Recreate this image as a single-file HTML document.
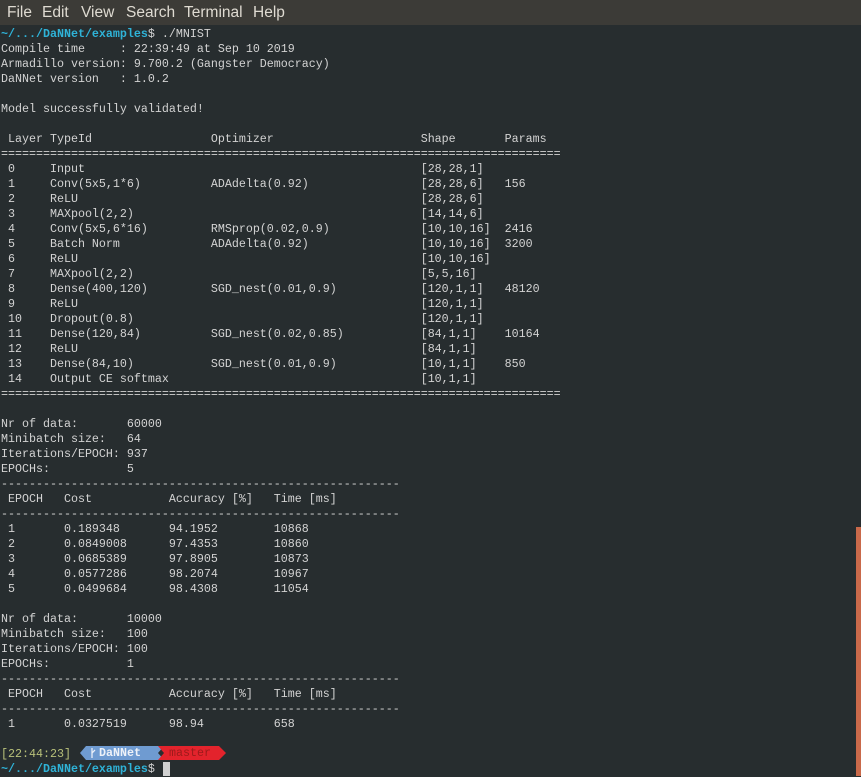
<!DOCTYPE html>
<html><head><meta charset="utf-8"><style>
html,body{margin:0;padding:0;width:861px;height:776px;overflow:hidden;background:#272d2f}
.menu{position:absolute;left:0;top:0;width:861px;height:25px;background:#3c3b37;color:#dfdbd2;font:15.5px "Liberation Sans",sans-serif}
.menu span{position:absolute;top:4px}
pre{position:absolute;left:1px;top:27px;margin:0;font:11.67px/15px "Liberation Mono",monospace;color:#d3d3d3;white-space:pre}
.p{color:#2fb3d8;font-weight:bold}
.y{color:#b8c07a}
.bar{position:absolute;left:856px;top:527px;width:5px;height:249px;background:#c9694a}
.seg{position:absolute;top:746px;height:14px;font:bold 11.67px/14px "Liberation Mono",monospace}
.cur{position:absolute;left:163px;top:762px;width:7px;height:14px;background:#d0d0d0}
</style></head><body>
<div class="menu"><span style="left:7px">File</span><span style="left:42px">Edit</span><span style="left:81px">View</span><span style="left:126px">Search</span><span style="left:184px">Terminal</span><span style="left:253px">Help</span></div>
<pre><span class="p">~/.../DaNNet/examples</span>$ ./MNIST
Compile time     : 22:39:49 at Sep 10 2019
Armadillo version: 9.700.2 (Gangster Democracy)
DaNNet version   : 1.0.2

Model successfully validated!

 Layer TypeId                 Optimizer                     Shape       Params
================================================================================
 0     Input                                                [28,28,1]
 1     Conv(5x5,1*6)          ADAdelta(0.92)                [28,28,6]   156
 2     ReLU                                                 [28,28,6]
 3     MAXpool(2,2)                                         [14,14,6]
 4     Conv(5x5,6*16)         RMSprop(0.02,0.9)             [10,10,16]  2416
 5     Batch Norm             ADAdelta(0.92)                [10,10,16]  3200
 6     ReLU                                                 [10,10,16]
 7     MAXpool(2,2)                                         [5,5,16]
 8     Dense(400,120)         SGD_nest(0.01,0.9)            [120,1,1]   48120
 9     ReLU                                                 [120,1,1]
 10    Dropout(0.8)                                         [120,1,1]
 11    Dense(120,84)          SGD_nest(0.02,0.85)           [84,1,1]    10164
 12    ReLU                                                 [84,1,1]
 13    Dense(84,10)           SGD_nest(0.01,0.9)            [10,1,1]    850
 14    Output CE softmax                                    [10,1,1]
================================================================================

Nr of data:       60000
Minibatch size:   64
Iterations/EPOCH: 937
EPOCHs:           5
---------------------------------------------------------
 EPOCH   Cost           Accuracy [%]   Time [ms]
---------------------------------------------------------
 1       0.189348       94.1952        10868
 2       0.0849008      97.4353        10860
 3       0.0685389      97.8905        10873
 4       0.0577286      98.2074        10967
 5       0.0499684      98.4308        11054

Nr of data:       10000
Minibatch size:   100
Iterations/EPOCH: 100
EPOCHs:           1
---------------------------------------------------------
 EPOCH   Cost           Accuracy [%]   Time [ms]
---------------------------------------------------------
 1       0.0327519      98.94          658

<span class="y">[22:44:23]</span>
<span class="p">~/.../DaNNet/examples</span>$</pre>
<svg style="position:absolute;left:76px;top:746px" width="154" height="14">
<polygon points="4,7 10,0 88,0 82,7 88,14 10,14" fill="#6f9bd1"/>
<polygon points="82,0 143,0 150,7 143,14 82,14 88,7" fill="#e3232c"/>
<path d="M16 2 v10 M16 7 l3 -3" stroke="#e8eef8" stroke-width="1.3" fill="none"/>
</svg>
<div class="seg" style="left:99px;color:#eef2f8">DaNNet</div>
<div class="seg" style="left:169px;color:#9c1b1b;font-weight:normal">master</div>
<div class="cur"></div>
<div class="bar"></div>
</body></html>
